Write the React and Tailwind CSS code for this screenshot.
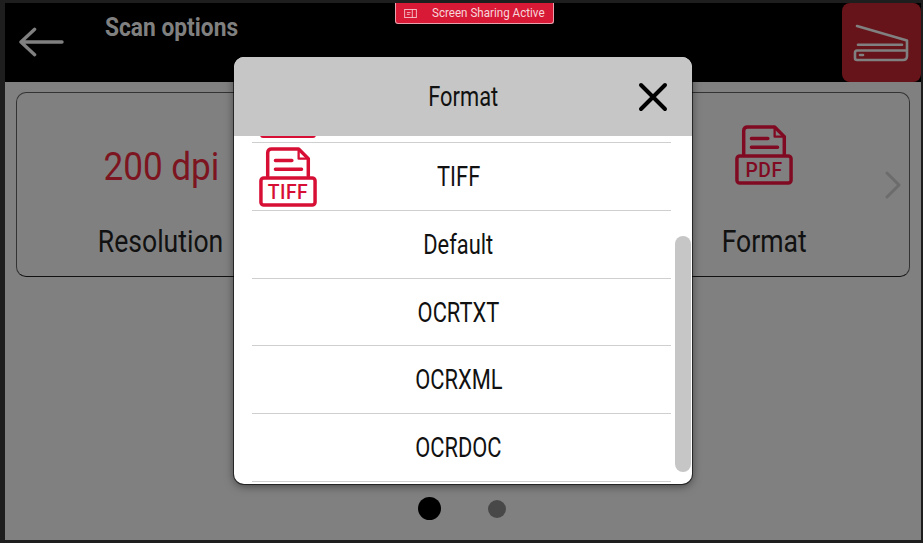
import React from "react";

const FONT = "font-['Roboto','Liberation_Sans',sans-serif]";

// condensed look: Roboto Condensed is not installed, so squeeze Roboto
const Cond = ({ children, className = "scale-x-[0.86]" }) => (
  <span className={`inline-block whitespace-nowrap ${className}`}>{children}</span>
);

const FileIcon = ({ label, color, className }) => (
  <svg viewBox="0 0 60 62" className={className} fill="none" stroke={color} strokeWidth="3.6" strokeLinejoin="round" strokeLinecap="round">
    <path d="M9 30V6q0-4 4-4h28l10 10v18" />
    <path d="M41 3v9h10" strokeWidth="2.4" />
    <path d="M17 14h17M17 23h27" />
    <rect x="2" y="32" width="56" height="28" rx="3" />
    <text x="30" y="54" textAnchor="middle" fill={color} stroke="none" fontFamily="Roboto, sans-serif" fontWeight="500" fontSize="20" letterSpacing="0.5">{label}</text>
  </svg>
);

const rows = ["Default", "OCRTXT", "OCRXML", "OCRDOC"];

const App = () => {
  return (
    <div className={`relative w-[923px] h-[543px] overflow-hidden bg-[#1e1e1e] pt-[3px] pb-[3px] pl-[5px] pr-[2px] ${FONT}`}>
      <div className="flex flex-col h-full bg-[#808080]">
        {/* header */}
        <div className="flex h-[79px] shrink-0 bg-black">
          <svg viewBox="0 0 46 28" className="w-[45px] h-[32px] ml-[14px] mt-[23px]" fill="none" stroke="#808080" strokeWidth="3.4" strokeLinecap="round" strokeLinejoin="round">
            <path d="M44 14H2M16 1L2 14l14 13" />
          </svg>
          <div className="ml-[41px] mt-[6px] h-[36px] text-[26px] leading-[36px] font-bold text-[#808080]">
            <Cond className="scale-x-[0.875] origin-left">Scan options</Cond>
          </div>
          <div className="ml-auto flex w-[79px] h-[79px] items-center justify-center rounded-[8px] bg-[#66141a]">
            <svg viewBox="853 23 57 38" className="w-[57px] h-[38px]" fill="none" stroke="#808080" strokeWidth="2.6" strokeLinecap="round" strokeLinejoin="round">
              <path d="M857 25l50 14.5V55q0 4-4 4H857q-2 0-2-2v-5q0-2.500 2-2.500h50" />
              <path d="M858 43.700h44" />
              <path d="M860 54h3" />
            </svg>
          </div>
        </div>

        {/* cards */}
        <div className="flex-1 flex flex-col px-[11px] pt-[10px]">
          <div className="relative flex h-[185px] rounded-[10px] border border-[#333] border-b-[#111] px-[4px]">
            <div className="flex flex-col items-center w-[280px]">
              <div className="mt-[55px] h-[38px] flex items-center text-[39px] text-[#7d1520]"><Cond className="scale-x-[0.9]">200 dpi</Cond></div>
              <div className="mt-[35px] text-[32px] leading-[40px] text-[#111]"><Cond className="scale-x-[0.83]">Resolution</Cond></div>
            </div>
            <div className="ml-auto mr-[61px] flex flex-col items-center w-[160px]">
              <FileIcon label="PDF" color="#800a22" className="mt-[32px] w-[58px] h-[60px] shrink-0" />
              <div className="mt-[36px] text-[32px] leading-[40px] text-[#111]"><Cond className="scale-x-[0.83]">Format</Cond></div>
            </div>
            <svg viewBox="0 0 16 28" className="absolute right-[8px] top-[78px] w-[16px] h-[28px]" fill="none" stroke="#6c6c6c" strokeWidth="3" strokeLinecap="round" strokeLinejoin="round">
              <path d="M2 2l12 12L2 26" />
            </svg>
          </div>

          {/* pager */}
          <div className="flex items-center justify-center gap-[47px] mt-[220px] pr-[3px]">
            <span className="w-[23px] h-[23px] rounded-full bg-black" />
            <span className="w-[18px] h-[18px] rounded-full bg-[#484848]" />
          </div>
        </div>
      </div>

      {/* screen sharing badge */}
      <div className="absolute left-[395px] top-[3px] flex h-[21px] w-[159px] items-center rounded-b-[3px] border-b border-x border-[#e8a0ac] bg-[#d81a36] text-white">
        <svg viewBox="0 0 14 10" className="ml-[8px] w-[13px] h-[9px] shrink-0" fill="none" stroke="#f5c5ce" strokeWidth="1">
          <rect x="0.5" y="0.5" width="13" height="9" />
          <path d="M9 0v10M3 4h4M3 6h3" />
        </svg>
        <div className="ml-[15px] text-[13.5px] leading-none text-[#f7d5da]">
          <Cond className="scale-x-[0.86] origin-left">Screen Sharing Active</Cond>
        </div>
      </div>

      {/* format dialog */}
      <div className="absolute left-[234px] top-[57px] w-[458px] h-[427px] overflow-hidden rounded-[10px] bg-white shadow-[0_0_0_1px_rgba(0,0,0,0.6),0_2px_10px_rgba(0,0,0,0.5)]">
        <div className="relative flex h-[79px] items-center justify-center pt-[2px] bg-[#c6c6c6]">
          <div className="text-[27px] text-[#111]"><Cond className="scale-x-[0.81]">Format</Cond></div>
          <svg viewBox="0 0 30 30" className="absolute right-[24px] top-[25px] w-[30px] h-[30px]" fill="none" stroke="#000" strokeWidth="4" strokeLinecap="round">
            <path d="M3 3l24 24M27 3L3 27" />
          </svg>
        </div>
        <div className="relative h-[348px] overflow-hidden">
          <div className="mx-[18px] w-[419px]">
            <div className="h-[7px] border-b border-[#cfcfcf] relative">
              <span className="absolute left-[8px] top-[-2px] w-[56px] h-[4px] rounded-b-[3px] bg-[#d80f35]" />
            </div>
            <div className="relative flex h-[68px] items-center justify-center pt-[2px] pr-[6px] border-b border-[#cfcfcf] text-[27px] text-[#111]">
              <FileIcon label="TIFF" color="#d80f35" className="absolute left-[7px] top-[4px] w-[58px] h-[60px]" />
              <Cond className="scale-x-[0.81]">TIFF</Cond>
            </div>
            {rows.map((label) => (
              <div key={label} className="flex h-[67.7px] items-center justify-center pt-[2px] pr-[6px] border-b border-[#cfcfcf] text-[27px] text-[#111]">
                <Cond className="scale-x-[0.81]">{label}</Cond>
              </div>
            ))}
          </div>
          <div className="absolute right-[1px] top-[100px] w-[16px] h-[236px] rounded-full bg-[#c6c6c6]" />
        </div>
      </div>
    </div>
  );
};

export default App;
